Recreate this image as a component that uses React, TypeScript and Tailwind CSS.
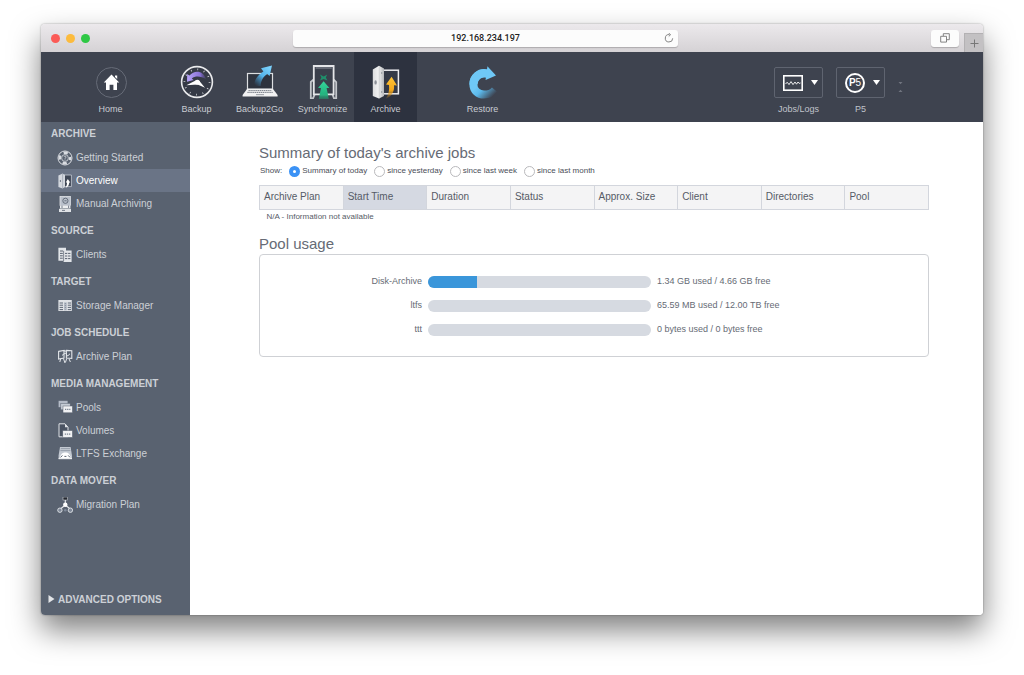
import { useState } from "react";
import type { ReactNode } from "react";

const BackupIcon = () => (
  <svg width="36" height="34" viewBox="0 0 36 34" fill="none">
    <defs>
      <linearGradient id="purple" x1="9" y1="0" x2="29" y2="0" gradientUnits="userSpaceOnUse">
        <stop stopColor="#b3a0f5" />
        <stop offset="0.6" stopColor="#8a73d8" />
        <stop offset="1" stopColor="#5b4d92" stopOpacity="0" />
      </linearGradient>
    </defs>
    <circle cx="18" cy="17" r="15.4" fill="#353a46" stroke="#e9eaec" strokeWidth="1.6" />
    <circle cx="18" cy="17" r="12.6" stroke="#d4d6da" strokeWidth="1.8" strokeDasharray="0.8 5.8" />
    <path d="M8.2 9 L8 16.8 L14.6 15 L12.8 13.4 C16 10.6 22 10.8 27 14 C25 6.4 16 4 10.4 10.6 Z" fill="url(#purple)" />
    <path d="M7.4 20.2 L16.6 15.4 L20.4 16 L26 22.8 L18.6 19.4 Z" fill="#fff" />
    <circle cx="18.4" cy="17.2" r="2.5" fill="#fff" />
  </svg>
);

const Backup2GoIcon = () => (
  <svg width="36" height="34" viewBox="0 0 36 34" fill="none">
    <defs>
      <linearGradient id="sky" x1="28" y1="3" x2="13" y2="20" gradientUnits="userSpaceOnUse">
        <stop stopColor="#7ad0fb" />
        <stop offset="0.5" stopColor="#54b4ea" />
        <stop offset="1" stopColor="#3a81b4" stopOpacity="0" />
      </linearGradient>
    </defs>
    <rect x="5.5" y="8.5" width="25" height="15.5" fill="#2e333e" stroke="#dcdee1" strokeWidth="1.2" />
    <path d="M5 24 H31 L35.6 30 V31.6 H0.6 V30 Z" fill="#f1f1f2" />
    <path d="M6.5 25.6 H29.6 M5.4 27.4 H30.8" stroke="#777c86" strokeWidth="1" strokeDasharray="1.4 0.5" />
    <path d="M14 29.6 H22" stroke="#a5a8af" strokeWidth="1.2" />
    <path d="M12.4 21 C12 14.6 15.4 10.4 21.4 6.4 L19 3.2 L30 0.4 L27.6 11 L25.2 9 C20.6 12.4 19 15.4 18.6 21 Z" fill="url(#sky)" />
  </svg>
);

const SynchronizeIcon = () => (
  <svg width="36" height="34" viewBox="0 0 36 34" fill="none">
    <defs>
      <linearGradient id="green" x1="0" y1="16" x2="0" y2="35" gradientUnits="userSpaceOnUse">
        <stop stopColor="#35d39a" />
        <stop offset="0.7" stopColor="#23b27f" />
        <stop offset="1" stopColor="#1f9a70" stopOpacity="0.4" />
      </linearGradient>
    </defs>
    <path d="M8.4 14.6 L5.8 17 V33.4 H8 L9.6 29.6 M28.8 14.6 L31.2 17 V33.4 H29 L27.6 29.6" stroke="#c3c6cb" strokeWidth="1.8" />
    <path d="M8.8 1 H28.6 V29.4 H8.8 Z" fill="#3a3f4b" stroke="#e4e5e8" strokeWidth="1.8" />
    <path d="M10.6 3 H26.8" stroke="#8f949e" strokeWidth="1" />
    <path d="M15 9.5 L18.7 11.5 L22.2 9.5 L20.8 12.4 L22.4 15.4 L18.7 14 L15 15.4 L16.4 12.4 Z" fill="#1f8f6b" />
    <path d="M18.6 16.2 L24.4 23 H21.6 L23.8 34 H13.8 L16 23 H13 Z" fill="url(#green)" />
  </svg>
);

const ArchiveIcon = () => (
  <svg width="36" height="34" viewBox="0 0 36 34" fill="none">
    <defs>
      <linearGradient id="amber" x1="0" y1="12" x2="0" y2="34" gradientUnits="userSpaceOnUse">
        <stop stopColor="#ffc437" />
        <stop offset="0.6" stopColor="#f3a71c" />
        <stop offset="1" stopColor="#c98212" stopOpacity="0.1" />
      </linearGradient>
      <linearGradient id="door" x1="4" y1="0" x2="16" y2="0" gradientUnits="userSpaceOnUse">
        <stop stopColor="#d9dadc" />
        <stop offset="0.55" stopColor="#f2f2f2" />
        <stop offset="1" stopColor="#b5b7ba" />
      </linearGradient>
    </defs>
    <rect x="14" y="5.2" width="16.4" height="23.6" fill="#353a47" stroke="#ececee" strokeWidth="1.5" />
    <path d="M4.8 4.4 L11 0.8 L16 3.6 V31 L11 33.6 L4.8 31 Z" fill="url(#door)" />
    <path d="M11.2 1 V33.4" stroke="#c3c5c9" strokeWidth="0.7" />
    <ellipse cx="7.6" cy="17.4" rx="1.2" ry="2.2" fill="#8b8f97" />
    <circle cx="13.7" cy="8" r="0.7" fill="#85898f" />
    <circle cx="13.7" cy="27" r="0.7" fill="#85898f" />
    <path d="M23.6 11.8 L29 20.4 L26 20.2 C26.6 26 24.2 31 17.6 34 C20.4 30 21.6 25.6 21 20 L18 19.6 Z" fill="url(#amber)" />
  </svg>
);

const RestoreIcon = () => (
  <svg width="36" height="34" viewBox="0 0 36 34" fill="none">
    <defs>
      <linearGradient id="restore" x1="17" y1="16" x2="30" y2="29" gradientUnits="userSpaceOnUse">
        <stop stopColor="#6fc8f6" />
        <stop offset="0.35" stopColor="#5bb8ea" />
        <stop offset="1" stopColor="#3e4350" />
      </linearGradient>
    </defs>
    <path d="M23 8.6 C14.5 6.5 8.4 12.5 8.4 19.4 C8.4 25.4 13.2 29.6 19 29.6 C23.4 29.6 27.4 28 30 25" stroke="url(#restore)" strokeWidth="8" />
    <path d="M22 8.6 C14.5 6.5 8.4 12.5 8.4 19.4" stroke="#6fc8f6" strokeWidth="8" />
    <path d="M22.4 1.2 L31 10.4 L20.6 15 Z" fill="#6fc8f6" />
  </svg>
);

const HomeIcon = () => (
  <svg width="36" height="34" viewBox="0 0 36 34" fill="none">
    <circle cx="18.5" cy="17.5" r="15" stroke="#666b77" strokeWidth="1" />
    <path d="M18.5 9.6 L26.2 17.4 H24 V25 H20.4 V19.8 H16.6 V25 H13 V17.4 H10.8 Z M22 10.4 H24.2 V14 L22 12 Z" fill="#fff" />
  </svg>
);

const sideIcons: Record<string, ReactNode> = {
  "Getting Started": (
    <>
      <circle cx="8" cy="8" r="7" stroke="#d9dce1" strokeWidth="1" />
      <circle cx="8" cy="8" r="5.2" stroke="#d9dce1" strokeWidth="2.4" strokeDasharray="4.2 3.97" strokeDashoffset="2" />
      <circle cx="8" cy="8" r="3.4" stroke="#d9dce1" strokeWidth="0.8" />
      <path d="M7 6.8 C7.4 5.8 9.2 6 9 7.2 C8.8 7.9 8 8 8 8.8 M8 9.5 V10.2" stroke="#d9dce1" strokeWidth="0.8" />
    </>
  ),
  Overview: (
    <>
      <path d="M7 2 H14.4 V13.6 H7 Z" fill="#3f4756" stroke="#c5cad3" strokeWidth="0.8" />
      <path d="M1.4 2.4 L5.6 0.6 L8 2 V14 L5.6 15.4 L1.4 14 Z" fill="#d3d7de" />
      <path d="M5.6 1 V15" stroke="#9ba3b0" strokeWidth="0.7" />
      <path d="M3.4 7 V9" stroke="#707988" />
      <path d="M10.8 6 L13.2 9.4 H12.2 C12.2 12 11 13.8 8.6 14.8 C9.8 12.6 10 11 10 9.4 H8.8 Z" fill="#fff" />
    </>
  ),
  "Manual Archiving": (
    <>
      <rect x="3" y="0.4" width="10.4" height="9" fill="#b9c0cb" stroke="#dfe2e6" strokeWidth="0.8" />
      <circle cx="8.4" cy="4.8" r="2.6" stroke="#5a6371" strokeWidth="0.9" />
      <path d="M7.4 4.8 H9.6" stroke="#5a6371" strokeWidth="0.9" />
      <path d="M3 10 H13.4 V12.4 H3 Z" fill="#eceef0" />
      <path d="M2 12.8 H14 V16 H2 Z" fill="#dfe2e6" />
      <path d="M5 9.6 V12 M11.6 9.6 V12 M5 14.4 H8" stroke="#697281" strokeWidth="0.9" />
    </>
  ),
  Clients: (
    <>
      <path d="M1.4 0.8 H9 V3.6 H14.6 V15 H6.6 V13.8 H1.4 Z" fill="#e2e5e9" />
      <path d="M3 4 H6.2 M3 6.4 H5.8 M3 8.8 H5.8 M3 11.2 H5.8 M8 6.4 H13.4 M8 9 H13.4 M8 11.6 H13.4" stroke="#5a6371" strokeWidth="1" />
      <path d="M6.6 4 V14" stroke="#5a6371" strokeWidth="0.7" />
      <path d="M10.6 5.6 V14" stroke="#e2e5e9" strokeWidth="0.8" />
    </>
  ),
  "Storage Manager": (
    <>
      <rect x="1.4" y="2" width="13.4" height="11" fill="#dfe2e6" />
      <path d="M2.6 5 H6 M2.6 7.2 H6 M2.6 9.4 H6 M2.6 11.6 H6 M10.8 5 H14 M10.8 7.2 H14 M10.8 9.4 H14 M10.8 11.6 H14" stroke="#5d6674" strokeWidth="1" />
      <rect x="7" y="4.4" width="2.8" height="8" fill="#b2b9c4" />
      <path d="M8.4 5 V11.6" stroke="#7e8794" strokeWidth="0.8" strokeDasharray="1 1" />
    </>
  ),
  "Archive Plan": (
    <>
      <path d="M1.6 2.4 L7 1.4 V9 L1.6 10 Z M7 1.4 L9.4 2.4 M9.4 1.4 L14.8 1.8 V9.4 L9.4 9 Z" stroke="#e2e5e9" strokeWidth="1.1" />
      <path d="M3.6 10 L2.8 13 M6.4 9.4 L8 14 M9.8 9.4 L8.4 13.4 M12 9.8 L13.4 13" stroke="#e2e5e9" strokeWidth="1" />
      <path d="M5 6.4 L8.4 4 L10.6 7 L13 4.8" stroke="#e2e5e9" strokeWidth="1" />
    </>
  ),
  Pools: (
    <>
      <rect x="1.6" y="0.8" width="9" height="6.4" fill="#b4bbc7" />
      <rect x="3.8" y="3.4" width="9.4" height="6.4" fill="#c6ccd5" stroke="#596270" strokeWidth="0.5" />
      <rect x="6" y="6" width="9.4" height="6.8" fill="#f0f1f3" stroke="#596270" strokeWidth="0.5" />
      <path d="M8 9.4 H13.4" stroke="#7b8492" strokeWidth="1.2" strokeDasharray="1.3 0.8" />
    </>
  ),
  Volumes: (
    <>
      <path d="M2 0.8 H8 L11 4.2 V13.8 H2 Z" fill="#4a5362" stroke="#dfe2e6" strokeWidth="1" />
      <path d="M8 0.8 V4.2 H11 Z" fill="#dfe2e6" />
      <rect x="5.8" y="7.6" width="9.6" height="6.8" fill="#f0f1f3" stroke="#596270" strokeWidth="0.5" />
      <path d="M7.8 11.2 H13.6" stroke="#7b8492" strokeWidth="1.2" strokeDasharray="1.3 0.8" />
    </>
  ),
  "LTFS Exchange": (
    <>
      <path d="M3 1 H13.6 L15 9.4 V13 H1.6 V9.4 Z" fill="#c3c9d2" />
      <path d="M3.8 2.6 H13 M3.4 4.6 H13.4" stroke="#8b94a2" strokeWidth="0.8" />
      <path d="M2.6 12 C4 7.4 6 6.4 8.4 6.4 C10.8 6.4 12.6 7.4 14 12 Z" fill="#fff" />
      <path d="M3.6 11.4 L5.4 9.4 M13 11.4 L11.2 9.4 M7.4 10.4 H9.4" stroke="#596270" strokeWidth="1" />
      <path d="M1.6 12.6 H15" stroke="#eceef0" strokeWidth="1.2" />
    </>
  ),
  "Migration Plan": (
    <>
      <rect x="6" y="0" width="4.6" height="3" fill="#23272f" stroke="#e2e5e9" strokeWidth="0.5" />
      <path d="M8.3 3 V8 M8.3 8 L3.4 12 M8.3 8 L13.2 12" stroke="#e9ebee" strokeWidth="1.1" />
      <circle cx="8.3" cy="7.8" r="2.2" fill="#fff" />
      <circle cx="2.9" cy="13.2" r="2.2" fill="#7f8999" stroke="#e2e5e9" strokeWidth="0.9" />
      <circle cx="8.3" cy="13.2" r="1.3" fill="#7f8999" />
      <circle cx="13.4" cy="13.2" r="2.2" fill="#7f8999" stroke="#e2e5e9" strokeWidth="0.9" />
    </>
  ),
};

const sections = [
  { title: "ARCHIVE", items: ["Getting Started", "Overview", "Manual Archiving"] },
  { title: "SOURCE", items: ["Clients"] },
  { title: "TARGET", items: ["Storage Manager"] },
  { title: "JOB SCHEDULE", items: ["Archive Plan"] },
  { title: "MEDIA MANAGEMENT", items: ["Pools", "Volumes", "LTFS Exchange"] },
  { title: "DATA MOVER", items: ["Migration Plan"] },
];

const columns = [
  "Archive Plan",
  "Start Time",
  "Duration",
  "Status",
  "Approx. Size",
  "Client",
  "Directories",
  "Pool",
];

const ranges = ["Summary of today", "since yesterday", "since last week", "since last month"];

const pools = [
  { name: "Disk-Archive", percent: 22, usage: "1.34 GB used / 4.66 GB free" },
  { name: "ltfs", percent: 0, usage: "65.59 MB used / 12.00 TB free" },
  { name: "ttt", percent: 0, usage: "0 bytes used / 0 bytes free" },
];

const TitleBar = () => (
  <header className="flex h-7 items-stretch rounded-t bg-gradient-to-b from-[#ece9ec] to-[#d5d2d5]">
    <div className="flex flex-[252] items-center gap-[6px]">
      <button aria-label="Close" className="ml-[10px] size-[9px] rounded-full bg-[#fb5b57]" />
      <button aria-label="Minimize" className="size-[9px] rounded-full bg-[#fcbb3d]" />
      <button aria-label="Zoom" className="size-[9px] rounded-full bg-[#2fc845]" />
    </div>
    <div className="relative flex flex-[385] items-center">
      <input
        aria-label="Address"
        defaultValue="192.168.234.197"
        className="h-[17px] w-full rounded-[3px] bg-[#fcfcfc] text-center font-[Roboto,sans-serif] text-[9px] font-medium text-[#222] shadow-[0_1px_1px_rgba(0,0,0,0.2)] outline-none"
      />
      <button aria-label="Reload" className="absolute right-1">
        <svg width="10" height="10" viewBox="0 0 10 10" fill="none" stroke="#777" strokeWidth="0.9">
          <path d="M5.4 1.6 A3.7 3.7 0 1 0 8.7 5.3" />
          <path d="M4.6 0 L6.6 1.7 L4.8 3.4" />
        </svg>
      </button>
    </div>
    <div className="flex flex-[305] items-center justify-end gap-[5px]">
      <button
        aria-label="Show tabs"
        className="flex h-[17px] w-7 items-center justify-center rounded-[3px] bg-[#fcfcfc] shadow-[0_1px_1px_rgba(0,0,0,0.2)]"
      >
        <svg width="10" height="10" viewBox="0 0 10 10" fill="none" stroke="#777" strokeWidth="0.9">
          <path d="M0.7 3.3 H6.5 V9.1 H0.7 Z M3.3 3 V0.7 H9.3 V6.7 H6.8" />
        </svg>
      </button>
      <button
        aria-label="New tab"
        className="flex h-[19px] w-[19px] items-center justify-center self-end border-t border-l border-[#b3b1b3] bg-[#c3c1c3]"
      >
        <svg width="9" height="9" viewBox="0 0 9 9" stroke="#777">
          <path d="M4.5 0.5 V8.5 M0.5 4.5 H8.5" />
        </svg>
      </button>
    </div>
  </header>
);

const NavItem = ({ label, icon, active }: { label: string; icon: ReactNode; active?: boolean }) => (
  <button
    className={`flex h-full w-[63px] flex-col items-center gap-1 pt-[13px] text-[9px] leading-3 text-[#c9ccd2] ${
      active ? "bg-[#2d323f]" : ""
    }`}
  >
    {icon}
    {label}
  </button>
);

const MenuButton = ({ label, children }: { label: string; children: ReactNode }) => (
  <div className="flex flex-col items-center gap-[5px] pt-[15px] text-[9px] leading-3 text-[#c0c4cb]">
    <button
      aria-label={label}
      className="flex h-[31px] w-[49px] items-center justify-between rounded-[2px] border border-[#5f6470] pr-1 pl-2"
    >
      {children}
      <svg width="7" height="5" viewBox="0 0 7 5" fill="#fff">
        <path d="M0 0 H7 L3.5 5 Z" />
      </svg>
    </button>
    {label}
  </div>
);

const NavBar = () => (
  <nav className="flex h-[70px] bg-[#3e434f] pr-20 pl-[38px]">
    <NavItem label="Home" icon={<HomeIcon />} />
    <div className="ml-[23px] flex">
      <NavItem label="Backup" icon={<BackupIcon />} />
      <NavItem label="Backup2Go" icon={<Backup2GoIcon />} />
      <NavItem label="Synchronize" icon={<SynchronizeIcon />} />
      <NavItem label="Archive" icon={<ArchiveIcon />} active />
    </div>
    <div className="ml-[34px]">
      <NavItem label="Restore" icon={<RestoreIcon />} />
    </div>
    <div className="ml-auto flex gap-[13px]">
      <MenuButton label="Jobs/Logs">
        <svg width="20" height="16" viewBox="0 0 20 16" fill="none" stroke="#fff">
          <rect x="0.8" y="0.8" width="18.4" height="14.4" strokeWidth="1.6" />
          <path
            d="M2.5 8.5 L4.5 7.5 L6 9.6 L8 6.6 L10 9.6 L12 7 L13.5 9.2 L15 7 L16.2 8.4 L17.5 8"
            strokeWidth="0.9"
          />
        </svg>
      </MenuButton>
      <MenuButton label="P5">
        <span className="flex size-5 items-center justify-center rounded-full border-2 border-white text-[10px] leading-none font-bold text-white">
          P<span className="font-normal">5</span>
        </span>
      </MenuButton>
      <button aria-label="Resize toolbar" className="flex flex-col justify-center">
        <svg width="5" height="12" viewBox="0 0 5 12" fill="#70757f">
          <path d="M0.5 1 H4.5 L2.5 3.2 Z M0.5 11 H4.5 L2.5 8.8 Z" />
        </svg>
      </button>
    </div>
  </nav>
);

const Sidebar = () => (
  <aside className="flex w-[149px] shrink-0 flex-col justify-between rounded-bl bg-[#596270] pb-1 text-[10px] text-[#ccd0d6]">
    <div className="flex flex-col gap-1">
      {sections.map((section) => (
        <section key={section.title}>
          <h3 className="h-6 pl-[10px] leading-6 font-bold">{section.title}</h3>
          <ul>
            {section.items.map((item) => (
              <li key={item}>
                <a
                  href="#"
                  className={`flex h-[23px] items-center gap-[3px] pl-4 ${
                    item === "Overview" ? "bg-[#6a7486] text-white" : ""
                  }`}
                >
                  <svg width="16" height="16" viewBox="0 0 16 16" fill="none">
                    {sideIcons[item]}
                  </svg>
                  {item}
                </a>
              </li>
            ))}
          </ul>
        </section>
      ))}
    </div>
    <button className="flex h-6 items-center gap-[3px] pl-[7px] font-bold">
      <svg width="7" height="8" viewBox="0 0 7 8" fill="#e3e5e8">
        <path d="M0.5 0 L6.5 4 L0.5 8 Z" />
      </svg>
      ADVANCED OPTIONS
    </button>
  </aside>
);

const Overview = () => {
  const [range, setRange] = useState(ranges[0]);

  return (
    <main className="min-w-0 flex-1 rounded-br bg-white pt-[21px] pr-[54px] pl-[69px] text-[#565b66]">
      <h1 className="text-[15px] leading-5 text-[#666b75]">Summary of today's archive jobs</h1>
      <div className="flex h-4 items-center gap-[7px] text-[8px] text-[#4a4e57]">
        <span className="pl-px">Show:</span>
        {ranges.map((name) => (
          <label key={name} className="flex items-center gap-[2px]">
            <input
              type="radio"
              name="range"
              checked={range === name}
              onChange={() => setRange(name)}
              className="size-[11px] appearance-none rounded-full border border-[#b9b9bc] bg-white checked:border-4 checked:border-[#3b92f5]"
            />
            {name}
          </label>
        ))}
      </div>

      <table className="mt-[6px] w-full table-fixed border-collapse text-left">
        <thead>
          <tr className="h-6">
            {columns.map((column) => (
              <th
                key={column}
                className={`border border-[#d3d6dd] pt-0 pb-[2px] pl-1 text-[10px] leading-4 font-normal ${
                  column === "Start Time" ? "bg-[#d5d9e2]" : "bg-[#f4f4f5]"
                }`}
              >
                {column}
              </th>
            ))}
          </tr>
        </thead>
        <tbody>
          <tr>
            <td colSpan={columns.length} className="pl-[7px] text-[8px] leading-[14px]">
              N/A - Information not available
            </td>
          </tr>
        </tbody>
      </table>

      <h2 className="mt-[10px] text-[15px] leading-5 text-[#666b75]">Pool usage</h2>
      <div className="rounded border border-[#cfd1d5] pt-[15px] pb-[14px] text-[9px]">
        {pools.map((pool) => (
          <div
            key={pool.name}
            className="grid h-6 grid-cols-[162fr_223fr_271fr] items-center gap-[6px] text-[#666b75]"
          >
            <span className="text-right">{pool.name}</span>
            <div
              role="progressbar"
              aria-label={pool.name}
              aria-valuenow={pool.percent}
              className="h-3 overflow-hidden rounded-full bg-[#d6dae1]"
            >
              <div className="h-full bg-[#3a96da]" style={{ width: `${pool.percent}%` }} />
            </div>
            <span>{pool.usage}</span>
          </div>
        ))}
      </div>
    </main>
  );
};

const App = () => (
  <div className="flex min-h-screen flex-col bg-white px-[41px] pt-6 pb-[60px] font-['Liberation_Sans',Arial,sans-serif]">
    <div className="flex flex-1 flex-col rounded shadow-[0_15px_30px_rgba(0,0,0,0.5),0_0_2px_rgba(0,0,0,0.4)]">
      <TitleBar />
      <NavBar />
      <div className="flex flex-1">
        <Sidebar />
        <Overview />
      </div>
    </div>
  </div>
);

export default App;
